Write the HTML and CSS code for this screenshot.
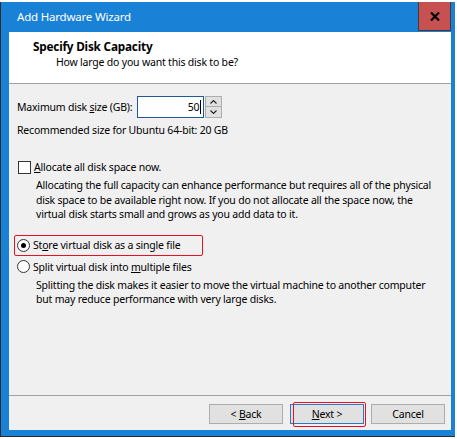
FILE: index.html
```html
<!DOCTYPE html>
<html>
<head>
<meta charset="utf-8">
<link rel="stylesheet" href="styles.css">
</head>
<body>
<div class="window">
  <div class="titlebar">
    <span class="title">Add Hardware Wizard</span>
    <span class="close">
      <svg width="10" height="9" viewBox="0 0 10 9"><path d="M1 0.5 L9 8.5 M9 0.5 L1 8.5" stroke="#000" stroke-width="2.2" fill="none"/></svg>
    </span>
  </div>
  <div class="client">
    <div class="header">
      <div class="h-title">Specify Disk Capacity</div>
      <div class="h-sub">How large do you want this disk to be?</div>
    </div>
    <div class="body">
      <div class="size-row">
        <span>Maximum disk <u>s</u>ize (GB):</span>
        <div class="spin">
          <div class="input"><span class="val">50</span><span class="caret"></span></div>
          <div class="spin-btns">
            <div class="sbtn"><svg width="7" height="4" viewBox="0 0 7 4"><path d="M0.5 3.5 L3.5 0.5 L6.5 3.5" stroke="#222" stroke-width="1.1" fill="none"/></svg></div>
            <div class="sbtn"><svg width="7" height="4" viewBox="0 0 7 4"><path d="M0.5 0.5 L3.5 3.5 L6.5 0.5" stroke="#222" stroke-width="1.1" fill="none"/></svg></div>
          </div>
        </div>
      </div>
      <div class="rec">Recommended size for Ubuntu 64-bit: 20 GB</div>

      <div class="check-row">
        <span class="checkbox"></span>
        <span><u>A</u>llocate all disk space now.</span>
      </div>
      <div class="desc desc-alloc">Allocating the full capacity can enhance performance but requires all of the physical<br>disk space to be available right now. If you do not allocate all the space now, the<br>virtual disk starts small and grows as you add data to it.</div>

      <div class="radio-row selected-box">
        <span class="radio on"></span>
        <span>St<u>o</u>re virtual disk as a single file</span>
      </div>
      <div class="radio-row second">
        <span class="radio"></span>
        <span>Split virtual disk into <u>m</u>ultiple files</span>
      </div>
      <div class="desc desc-split">Splitting the disk makes it easier to move the virtual machine to another computer<br>but may reduce performance with very large disks.</div>
    </div>
    <div class="footer">
      <button class="btn">&lt; <u>B</u>ack</button>
      <button class="btn next"><u>N</u>ext &gt;</button>
      <button class="btn">Cancel</button>
    </div>
  </div>
</div>
</body>
</html>
```

FILE: styles.css
```css
*, *::before, *::after { box-sizing: border-box; }
html, body {
  margin: 0;
  padding: 0;
  background: #ffffff;
}
body {
  font-family: "Noto Sans", "Open Sans", sans-serif;
  font-size: 10.5px;
  letter-spacing: -0.2px;
  color: #000;
}
u { text-decoration: underline; text-underline-offset: 1px; }

.window {
  margin-top: 2px;
  width: 455px;
  border-left: 1px solid #2b2b2b;
  border-bottom: 1px solid #2b2b2b;
  background: #1a82d6;
  padding: 0 4px 6px 8px;
}
.titlebar {
  height: 30px;
  display: flex;
  align-items: center;
  justify-content: space-between;
}
.title {
  color: #fff;
  font-size: 11.5px;
  padding-left: 8px;
  margin-top: -1px;
}
.close {
  align-self: flex-start;
  width: 33px;
  height: 29px;
  background: #c75050;
  border: 1px solid #3d3d3d;
  border-top: none;
  display: flex;
  align-items: center;
  justify-content: center;
}
.client {
  background: #f0f0f0;
  display: flex;
  flex-direction: column;
}
.header {
  background: #fff;
  height: 52px;
  border-bottom: 1px solid #a0a0a0;
  padding: 6px 0 0 24px;
}
.h-title {
  font-weight: bold;
  font-size: 11.75px;
  letter-spacing: -0.2px;
  line-height: 16px;
}
.h-sub {
  padding-left: 23px;
  line-height: 16px;
}
.body {
  height: 311px;
  padding: 12px 0 0 8px;
}
.size-row {
  display: flex;
  align-items: center;
  gap: 5px;
  height: 22px;
}
.spin {
  display: flex;
}
.input {
  width: 67px;
  height: 22px;
  border: 1px solid #1e5a96;
  background: #fff;
  display: flex;
  align-items: center;
  justify-content: flex-end;
  padding-right: 2px;
}
.caret {
  width: 1px;
  height: 14px;
  background: #000;
  margin-left: 1px;
}
.spin-btns {
  display: flex;
  flex-direction: column;
  margin-left: 1px;
}
.sbtn {
  width: 17px;
  height: 11px;
  background: #e1e1e1;
  border: 1px solid #adadad;
  display: flex;
  align-items: center;
  justify-content: center;
}
.sbtn + .sbtn { border-top: none; }
.rec {
  margin-top: 4px;
  line-height: 16px;
}
.check-row {
  margin-top: 21px;
  display: flex;
  align-items: center;
  gap: 3px;
  padding-left: 1px;
  height: 16px;
}
.checkbox {
  width: 13px;
  height: 13px;
  border: 1px solid #333;
  background: #fff;
}
.desc {
  padding-left: 19px;
  line-height: 14.5px;
  white-space: nowrap;
}
.desc-alloc { margin-top: 3px; }
.radio-row {
  display: flex;
  align-items: center;
  gap: 3px;
}
.selected-box {
  margin-top: 13px;
  margin-left: -3px;
  padding-left: 2px;
  width: 189px;
  height: 21px;
  border: 1px solid #e81123;
  border-radius: 2px;
}
.second {
  margin-top: 2px;
  height: 18px;
}
.radio {
  width: 13px;
  height: 13px;
  border: 1px solid #333;
  border-radius: 50%;
  background: #fff;
  display: flex;
  align-items: center;
  justify-content: center;
}
.radio.on::after {
  content: "";
  width: 5px;
  height: 5px;
  border-radius: 50%;
  background: #000;
}
.desc-split { margin-top: 2px; }
.footer {
  height: 35px;
  border-top: 1px solid #a0a0a0;
  display: flex;
  align-items: flex-start;
  justify-content: flex-end;
  padding: 8px 6px 0 0;
  gap: 7px;
}
.btn {
  width: 74px;
  height: 20px;
  background: #e1e1e1;
  border: 1px solid #adadad;
  font-family: inherit;
  font-size: 10.5px;
  letter-spacing: -0.2px;
  color: #000;
  padding: 0;
  margin: 0;
}
.btn.next {
  position: relative;
  border-color: #2b79c2;
}
.btn.next::after {
  content: "";
  position: absolute;
  left: 2px;
  right: -3px;
  top: -3px;
  bottom: -4px;
  border: 1px solid #e81123;
  border-radius: 2px;
}
```
